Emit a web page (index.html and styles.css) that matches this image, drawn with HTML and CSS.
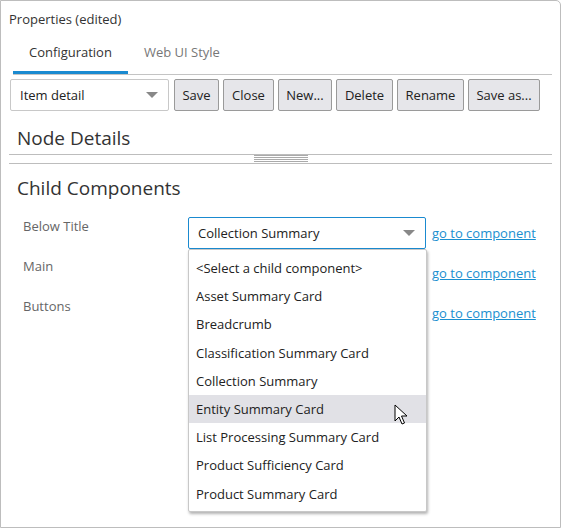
FILE: index.html
```html
<!DOCTYPE html>
<html>
<head>
<meta charset="utf-8">
<link rel="stylesheet" href="styles.css">
</head>
<body>
<div class="panel">
  <div class="title">Properties (edited)</div>
  <div class="tabs">
    <div class="tab active">Configuration</div>
    <div class="tab">Web UI Style</div>
  </div>
  <div class="toolbar">
    <div class="select small"><span>Item detail</span><span class="caret"></span></div>
    <button class="btn w45">Save</button>
    <button class="btn w51">Close</button>
    <button class="btn w54">New...</button>
    <button class="btn w57">Delete</button>
    <button class="btn w67">Rename</button>
    <button class="btn w72">Save as...</button>
  </div>
  <div class="heading first">Node Details</div>
  <div class="splitter"><div class="grip"></div></div>
  <div class="heading">Child Components</div>
  <div class="rows">
    <div class="row">
      <div class="label">Below Title</div>
      <div class="field">
        <div class="select focus"><span>Collection Summary</span><span class="caret"></span></div>
        <div class="dropdown">
          <div class="opt">&lt;Select a child component&gt;</div>
          <div class="opt">Asset Summary Card</div>
          <div class="opt">Breadcrumb</div>
          <div class="opt">Classification Summary Card</div>
          <div class="opt">Collection Summary</div>
          <div class="opt hover">Entity Summary Card</div>
          <div class="opt">List Processing Summary Card</div>
          <div class="opt">Product Sufficiency Card</div>
          <div class="opt">Product Summary Card</div>
          <svg class="cursor" width="14" height="22" viewBox="0 0 14 22"><path d="M1 1 L1 17 L5 13 L8 20 L10.5 19 L7.5 12 L13 12 Z" fill="#fff" stroke="#000" stroke-width="1" stroke-linejoin="round"/></svg>
        </div>
      </div>
      <a class="link">go to component</a>
    </div>
    <div class="row">
      <div class="label">Main</div>
      <div class="field"></div>
      <a class="link">go to component</a>
    </div>
    <div class="row">
      <div class="label">Buttons</div>
      <div class="field"></div>
      <a class="link">go to component</a>
    </div>
  </div>
</div>
</body>
</html>
```
FILE: styles.css
```css
* { box-sizing: border-box; }
body {
  margin: 0;
  font-family: "Open Sans", "Noto Sans", sans-serif;
  font-size: 13px;
  color: #222;
  background: #fff;
}
.panel {
  width: 561px;
  height: 528px;
  border: 1px solid #bdbdbd;
  border-top-right-radius: 5px;
  padding: 0 8px 0 8px;
}
.title {
  padding-top: 9px;
  height: 35px;
  line-height: 18px;
  color: #333;
}
.tabs {
  display: flex;
  margin: 0 0 0 4px;
  height: 39px;
  border-bottom: 1px solid #c4c4c4;
}
.tab {
  padding: 0 16px;
  line-height: 33px;
  color: #777;
}
.tab.active {
  color: #333;
  border-bottom: 3px solid #1a8ad0;
}
.toolbar {
  display: flex;
  gap: 4px;
  margin-top: 4px;
  margin-left: 1px;
  height: 32px;
}
.select {
  display: flex;
  align-items: center;
  justify-content: space-between;
  height: 32px;
  border: 1px solid #c8c8c8;
  border-radius: 2px;
  padding: 0 9px;
  background: #fff;
  color: #222;
}
.select.small { width: 159px; margin-right: 1px; }
.caret {
  width: 0; height: 0;
  border-left: 6px solid transparent;
  border-right: 6px solid transparent;
  border-top: 6px solid #888;
  margin-right: 1px;
}
.btn {
  font: inherit;
  color: #222;
  height: 32px;
  padding: 0;
  text-align: center;
  background: #e6e6ea;
  border: 1px solid #9a9a9a;
  border-radius: 2px;
}
.w45 { width: 45px; }
.w51 { width: 51px; }
.w54 { width: 54px; }
.w57 { width: 57px; }
.w67 { width: 67px; }
.w72 { width: 72px; }
.heading {
  font-size: 19px;
  color: #333;
  margin-left: 8px;
  line-height: 24px;
}
.heading.first { margin-top: 15px; }
.splitter {
  height: 10px;
  margin-top: 4px;
  border-top: 1px solid #bdbdbd;
  border-bottom: 1px solid #bdbdbd;
  display: flex;
  justify-content: center;
}
.grip {
  width: 54px;
  height: 8px;
  background: repeating-linear-gradient(to bottom, #aaa 0 1px, transparent 1px 2px);
}
.splitter + .heading { margin-top: 12px; }
.rows {
  margin-top: 17px;
  margin-left: 14px;
}
.row {
  display: flex;
  height: 40px;
}
.label {
  width: 165px;
  color: #666;
  line-height: 18px;
}
.field {
  width: 238px;
  position: relative;
}
.select.focus {
  border-color: #1a8ad0;
}
.link {
  margin-left: 6px;
  color: #1a8fd0;
  text-decoration: underline;
  line-height: 32px;
}
.dropdown {
  position: absolute;
  left: 0;
  top: 32px;
  width: 239px;
  height: 263px;
  background: #fff;
  border: 1px solid #c8c8c8;
  border-radius: 2px;
  box-shadow: 1px 2px 3px rgba(0,0,0,0.3);
  padding-top: 4px;
  z-index: 5;
}
.opt {
  height: 28.2px;
  line-height: 28px;
  padding-left: 7px;
  color: #222;
}
.opt.hover { background: #e1e1e6; }
.cursor {
  position: absolute;
  left: 205px;
  top: 154px;
}
```
